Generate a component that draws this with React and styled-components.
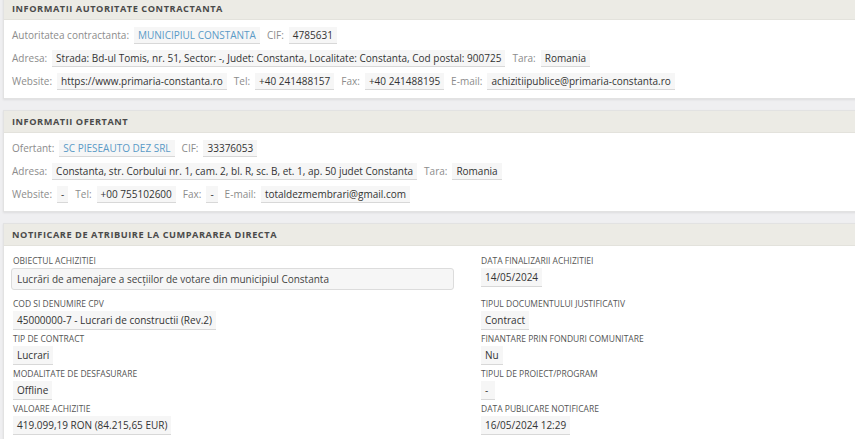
import React from 'react';
import styled, { createGlobalStyle } from 'styled-components';

const GlobalStyle = createGlobalStyle`
  html, body {
    margin: 0;
    padding: 0;
    background: #efeff1;
    font-family: "Open Sans", "DejaVu Sans", sans-serif;
    overflow: hidden;
  }
`;

const Page = styled.div`
  display: flex;
  flex-direction: column;
  gap: 11px;
  padding-left: 3px;
  margin-top: -3px;
  width: 860px;
`;

const Panel = styled.section`
  background: #fff;
  border: 1px solid #e2e2e2;
  border-right: none;
  box-shadow: 0 1px 2px rgba(0, 0, 0, 0.08);
`;

const PanelHeader = styled.div`
  height: 21px;
  display: flex;
  align-items: center;
  padding-left: 8px;
  background: #ecebe5;
  border-bottom: 1px solid #e3e2dc;
  font-size: 9.2px;
  font-weight: 700;
  color: #4a4a4a;
  letter-spacing: 0.55px;
`;

const Body = styled.div`
  padding: 6px 8px 8px;
  display: flex;
  flex-direction: column;
  gap: 5px;
`;

const Row = styled.div`
  display: flex;
  align-items: center;
  height: 18px;
  font-size: 10px;
`;

const Label = styled.span`
  color: #8c8c8c;
  margin-right: 5px;
`;

const Value = styled.span`
  display: inline-block;
  line-height: 16px;
  padding: 0 4px;
  background: #f6f6f6;
  border-bottom: 1px solid #d8d8d8;
  color: ${(p) => (p.$link ? '#5a9ac6' : '#333')};
  margin-right: 7px;
  white-space: nowrap;
`;

const Grid = styled.div`
  display: grid;
  grid-template-columns: 441px 1fr;
  column-gap: 27px;
  row-gap: 2px;
  padding: 8px 9px 6px;
`;

const Field = styled.div`
  display: flex;
  flex-direction: column;
  align-items: flex-start;
`;

const FieldLabel = styled.div`
  font-size: 8.5px;
  line-height: 14px;
  color: #555;
  text-transform: uppercase;
`;

const FieldValue = styled.div`
  font-size: 10px;
  line-height: 18px;
  padding: 0 4px;
  background: #f6f6f6;
  border-bottom: 1px solid #d8d8d8;
  color: #333;
  min-width: 6px;
`;

const TextBox = styled.div`
  box-sizing: border-box;
  width: calc(100% + 2px);
  margin-left: -2px;
  height: 22px;
  margin-bottom: 5px;
  display: flex;
  align-items: center;
  padding: 0 5px;
  background: #f6f6f6;
  border: 1px solid #dcdcdc;
  border-radius: 3px;
  font-size: 10px;
  color: #444;
`;

const Item = ({ label, value, link }) => (
  <>
    <Label>{label}</Label>
    <Value $link={link}>{value}</Value>
  </>
);

const FieldItem = ({ label, value }) => (
  <Field>
    <FieldLabel>{label}</FieldLabel>
    <FieldValue>{value}</FieldValue>
  </Field>
);

export default function App() {
  return (
    <>
      <GlobalStyle />
      <Page>
        <Panel>
          <PanelHeader>INFORMATII AUTORITATE CONTRACTANTA</PanelHeader>
          <Body>
            <Row>
              <Item label="Autoritatea contractanta:" value="MUNICIPIUL CONSTANTA" link />
              <Item label="CIF:" value="4785631" />
            </Row>
            <Row>
              <Item
                label="Adresa:"
                value="Strada: Bd-ul Tomis, nr. 51, Sector: -, Judet: Constanta, Localitate: Constanta, Cod postal: 900725"
              />
              <Item label="Tara:" value="Romania" />
            </Row>
            <Row>
              <Item label="Website:" value="https://www.primaria-constanta.ro" />
              <Item label="Tel:" value="+40 241488157" />
              <Item label="Fax:" value="+40 241488195" />
              <Item label="E-mail:" value="achizitiipublice@primaria-constanta.ro" />
            </Row>
          </Body>
        </Panel>

        <Panel>
          <PanelHeader>INFORMATII OFERTANT</PanelHeader>
          <Body>
            <Row>
              <Item label="Ofertant:" value="SC PIESEAUTO DEZ SRL" link />
              <Item label="CIF:" value="33376053" />
            </Row>
            <Row>
              <Item
                label="Adresa:"
                value="Constanta, str. Corbului nr. 1, cam. 2, bl. R, sc. B, et. 1, ap. 50 judet Constanta"
              />
              <Item label="Tara:" value="Romania" />
            </Row>
            <Row>
              <Item label="Website:" value="-" />
              <Item label="Tel:" value="+00 755102600" />
              <Item label="Fax:" value="-" />
              <Item label="E-mail:" value="totaldezmembrari@gmail.com" />
            </Row>
          </Body>
        </Panel>

        <Panel>
          <PanelHeader>NOTIFICARE DE ATRIBUIRE LA CUMPARAREA DIRECTA</PanelHeader>
          <Grid>
            <Field>
              <FieldLabel>OBIECTUL ACHIZITIEI</FieldLabel>
              <TextBox>Lucrări de amenajare a secțiilor de votare din municipiul Constanta</TextBox>
            </Field>
            <FieldItem label="DATA FINALIZARII ACHIZITIEI" value="14/05/2024" />
            <FieldItem label="COD SI DENUMIRE CPV" value="45000000-7 - Lucrari de constructii (Rev.2)" />
            <FieldItem label="TIPUL DOCUMENTULUI JUSTIFICATIV" value="Contract" />
            <FieldItem label="TIP DE CONTRACT" value="Lucrari" />
            <FieldItem label="FINANTARE PRIN FONDURI COMUNITARE" value="Nu" />
            <FieldItem label="MODALITATE DE DESFASURARE" value="Offline" />
            <FieldItem label="TIPUL DE PROIECT/PROGRAM" value="-" />
            <FieldItem label="VALOARE ACHIZITIE" value="419.099,19 RON (84.215,65 EUR)" />
            <FieldItem label="DATA PUBLICARE NOTIFICARE" value="16/05/2024 12:29" />
          </Grid>
        </Panel>
      </Page>
    </>
  );
}
